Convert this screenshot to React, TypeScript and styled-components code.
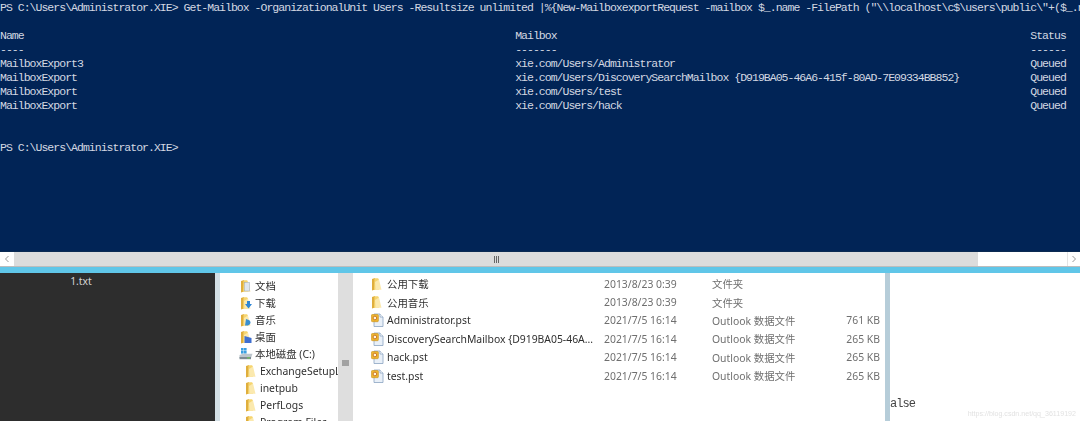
import React from "react";
import styled, { createGlobalStyle } from "styled-components";

const Global = createGlobalStyle`
  html, body { margin: 0; padding: 0; width: 1080px; height: 421px; overflow: hidden; background: #fff; }
  #root { width: 1080px; height: 421px; }
`;

const Page = styled.div`
  width: 1080px;
  height: 421px;
  display: flex;
  flex-direction: column;
  overflow: hidden;
  filter: blur(0.3px);
`;

const Console = styled.pre`
  margin: 0;
  height: 252px;
  flex: none;
  box-sizing: border-box;
  padding-top: 1px;
  border-bottom: 1px solid #0b2a52;
  background: #012456;
  color: #d3d8e2;
  font-family: "Liberation Mono", monospace;
  font-size: 11.5px;
  letter-spacing: -0.98px;
  line-height: 14px;
  white-space: pre;
  overflow: hidden;
`;

const HScroll = styled.div`
  flex: none;
  height: 15px;
  box-sizing: border-box;
  display: flex;
  background: #fff;
  border-bottom: 1px solid #bdbdbd;
`;

const ScrollBtn = styled.div<{ $w: number }>`
  flex: none;
  width: ${(p) => p.$w}px;
  display: flex;
  align-items: center;
  justify-content: center;
  background: #fff;
`;

const HThumb = styled.div`
  width: 964px;
  flex: none;
  background: #dcdcdc;
  display: flex;
  align-items: center;
  justify-content: center;
`;

const HTrack = styled.div`
  flex: 1;
  border-right: 1px solid #e4e4e4;
`;

const Stripe = styled.div`
  flex: none;
  height: 6px;
  background: #60c6e8;
`;

const Desktop = styled.div`
  flex: 1;
  min-height: 0;
  display: flex;
  font-family: "Noto Sans", "Noto Sans CJK SC", sans-serif;
  font-size: 10.4px;
`;

const DarkPanel = styled.div`
  flex: none;
  width: 215px;
  background: #2d2d2d;
  color: #d4d4d4;
  line-height: 16px;
  box-sizing: border-box;
  display: flex;
  justify-content: center;
  padding-right: 53px;
`;

const Gutter = styled.div`
  flex: none;
  width: 5px;
  background: #d3dfe5;
`;

const Tree = styled.div`
  flex: none;
  width: 118px;
  background: #fff;
  overflow: hidden;
  padding-top: 4px;
  box-sizing: border-box;
`;

const TreeRow = styled.div<{ $indent: number }>`
  height: 17px;
  display: flex;
  align-items: center;
  gap: 2px;
  padding-left: ${(p) => p.$indent}px;
  color: #2f2f2f;
  white-space: nowrap;
`;

const VScroll = styled.div`
  flex: none;
  width: 15px;
  background: #dedede;
  display: flex;
  justify-content: center;
  padding-top: 87px;
  box-sizing: border-box;
`;

const Files = styled.div`
  flex: none;
  width: 532px;
  padding-top: 1.5px;
  background: #fff;
  box-sizing: border-box;
`;

const FileRow = styled.div`
  height: 18.4px;
  display: grid;
  grid-template-columns: 16px 217px 108px 120px 48px;
  padding-left: 18px;
  align-items: center;
  white-space: nowrap;
`;

const FileIcon = styled.div`
  display: flex;
  align-items: center;
`;

const FileName = styled.div`
  color: #2f2f2f;
`;

const Meta = styled.div`
  color: #6f6f6f;
`;

const Size = styled(Meta)`
  text-align: right;
`;

const Splitter = styled.div`
  flex: none;
  width: 5px;
  background: #b6cdd9;
`;

const RightPane = styled.div`
  flex: 1;
  background: #fff;
  display: flex;
  flex-direction: column;
  justify-content: flex-end;
  padding-bottom: 2px;
`;

const CodeText = styled.div`
  font-family: "Liberation Mono", monospace;
  font-size: 12px;
  letter-spacing: -0.95px;
  line-height: 14px;
  color: #444;
  margin-bottom: -1px;
`;

const Watermark = styled.div`
  font-family: "Liberation Sans", sans-serif;
  font-size: 7.1px;
  line-height: 9px;
  color: #e2e2e2;
  text-align: right;
  padding-right: 4px;
`;

const Folder = ({ overlay }: { overlay?: React.ReactNode }) => (
  <svg width="13" height="14" viewBox="0 0 13 14" style={{ flex: "none" }}>
    <path d="M1 2 L4 1 V12.5 L1 13.5 Z" fill="#dfae3d" />
    <path d="M3.5 1.2 H7 L8 2.4 V12.8 H3 Z" fill="#f6d56f" />
    <path d="M8 2.4 L10.5 12.8 H4.5 L4 5 Z" fill="#fbe9ae" />
    {overlay}
  </svg>
);

const Pst = () => (
  <svg width="13" height="14" viewBox="0 0 13 14">
    <path d="M3 1 H9 L12 4 V13.5 H3 Z" fill="#e9f0f8" stroke="#8aa3c2" strokeWidth="0.8" />
    <path d="M9 1 V4 H12" fill="#fff" stroke="#8aa3c2" strokeWidth="0.8" />
    <rect x="0.4" y="1.5" width="7" height="7.2" rx="1" fill="#edb52f" stroke="#c98e1a" strokeWidth="0.6" />
    <circle cx="3.9" cy="5" r="1.8" fill="#fff6d8" stroke="#c4661a" strokeWidth="0.8" />
  </svg>
);

const Drive = () => (
  <svg width="14" height="14" viewBox="0 0 14 14" style={{ flex: "none" }}>
    <rect x="2" y="1" width="2.6" height="2.6" fill="#3a9fe0" />
    <rect x="5" y="1" width="2.6" height="2.6" fill="#3a9fe0" />
    <rect x="2" y="4" width="2.6" height="2.6" fill="#3a9fe0" />
    <rect x="5" y="4" width="2.6" height="2.6" fill="#3a9fe0" />
    <path d="M0.5 8 L4 6.8 H13.5 L12 11 H0.5 Z" fill="#bcc5cc" />
    <path d="M0.5 10 H12 V12.2 H0.5 Z" fill="#7d8a92" />
    <rect x="8" y="10.4" width="3" height="1" fill="#6fd04a" />
  </svg>
);

const Grip = ({ vertical }: { vertical?: boolean }) => (
  <svg width="7" height="7" viewBox="0 0 7 7">
    {[0.5, 2.5, 4.5].map((v) =>
      vertical ? (
        <rect key={v} x="0" y={v} width="7" height="1" fill="#666" />
      ) : (
        <rect key={v} x={v + 0.5} y="0" width="1" height="7" fill="#666" />
      )
    )}
  </svg>
);

const Chevron = ({ dir }: { dir: "left" | "right" }) => (
  <svg width="6" height="8" viewBox="0 0 6 8">
    <path d={dir === "left" ? "M4.5 1 L1.5 4 L4.5 7" : "M1.5 1 L4.5 4 L1.5 7"} fill="none" stroke="#999" strokeWidth="1" />
  </svg>
);

const pad = (s: string, n: number) => s.padEnd(n, " ");
const consoleRow = (a: string, b: string, c: string) => pad(a, 87) + pad(b, 87) + c;

const consoleText = [
  'PS C:\\Users\\Administrator.XIE> Get-Mailbox -OrganizationalUnit Users -Resultsize unlimited |%{New-MailboxexportRequest -mailbox $_.name -FilePath ("\\\\localhost\\c$\\users\\public\\"+($_.name',
  "",
  consoleRow("Name", "Mailbox", "Status"),
  consoleRow("----", "-------", "------"),
  consoleRow("MailboxExport3", "xie.com/Users/Administrator", "Queued"),
  consoleRow("MailboxExport", "xie.com/Users/DiscoverySearchMailbox {D919BA05-46A6-415f-80AD-7E09334BB852}", "Queued"),
  consoleRow("MailboxExport", "xie.com/Users/test", "Queued"),
  consoleRow("MailboxExport", "xie.com/Users/hack", "Queued"),
  "",
  "",
  "PS C:\\Users\\Administrator.XIE>",
].join("\n");

const treeItems: { label: string; indent: number; icon: React.ReactNode }[] = [
  { label: "文档", indent: 20, icon: <Folder overlay={<rect x="4.5" y="3.5" width="5" height="8.5" fill="#dfe6ee" stroke="#9aa7b5" strokeWidth="0.5" />} /> },
  { label: "下载", indent: 20, icon: <Folder overlay={<path d="M7 5 H10 V8 H12 L8.5 12.5 L5 8 H7 Z" fill="#2f86d6" />} /> },
  { label: "音乐", indent: 20, icon: <Folder overlay={<path d="M6 6 Q11 7 10.5 10 Q9.5 13 5 12.5 Z" fill="#3a8fd0" />} /> },
  { label: "桌面", indent: 20, icon: <Folder overlay={<path d="M4.5 6 L11.5 8 V13 H4.5 Z" fill="#3f6fd0" />} /> },
  { label: "本地磁盘 (C:)", indent: 19, icon: <Drive /> },
  { label: "ExchangeSetupLogs", indent: 25, icon: <Folder /> },
  { label: "inetpub", indent: 25, icon: <Folder /> },
  { label: "PerfLogs", indent: 25, icon: <Folder /> },
  { label: "Program Files", indent: 25, icon: <Folder /> },
];

const fileItems = [
  { name: "公用下载", date: "2013/8/23 0:39", type: "文件夹", size: "", pst: false },
  { name: "公用音乐", date: "2013/8/23 0:39", type: "文件夹", size: "", pst: false },
  { name: "Administrator.pst", date: "2021/7/5 16:14", type: "Outlook 数据文件", size: "761 KB", pst: true },
  { name: "DiscoverySearchMailbox {D919BA05-46A...", date: "2021/7/5 16:14", type: "Outlook 数据文件", size: "265 KB", pst: true },
  { name: "hack.pst", date: "2021/7/5 16:14", type: "Outlook 数据文件", size: "265 KB", pst: true },
  { name: "test.pst", date: "2021/7/5 16:14", type: "Outlook 数据文件", size: "265 KB", pst: true },
];

export default function App() {
  return (
    <Page>
      <Global />
      <Console>{consoleText}</Console>
      <HScroll>
        <ScrollBtn $w={14}><Chevron dir="left" /></ScrollBtn>
        <HThumb><Grip /></HThumb>
        <HTrack />
        <ScrollBtn $w={12}><Chevron dir="right" /></ScrollBtn>
      </HScroll>
      <Stripe />
      <Desktop>
        <DarkPanel>1.txt</DarkPanel>
        <Gutter />
        <Tree>
          {treeItems.map((t) => (
            <TreeRow key={t.label} $indent={t.indent}>
              {t.icon}
              <span>{t.label}</span>
            </TreeRow>
          ))}
        </Tree>
        <VScroll><Grip vertical /></VScroll>
        <Files>
          {fileItems.map((f) => (
            <FileRow key={f.name}>
              <FileIcon>{f.pst ? <Pst /> : <Folder />}</FileIcon>
              <FileName>{f.name}</FileName>
              <Meta>{f.date}</Meta>
              <Meta>{f.type}</Meta>
              <Size>{f.size}</Size>
            </FileRow>
          ))}
        </Files>
        <Splitter />
        <RightPane>
          <CodeText>alse</CodeText>
          <Watermark>https://blog.csdn.net/qq_36119192</Watermark>
        </RightPane>
      </Desktop>
    </Page>
  );
}
